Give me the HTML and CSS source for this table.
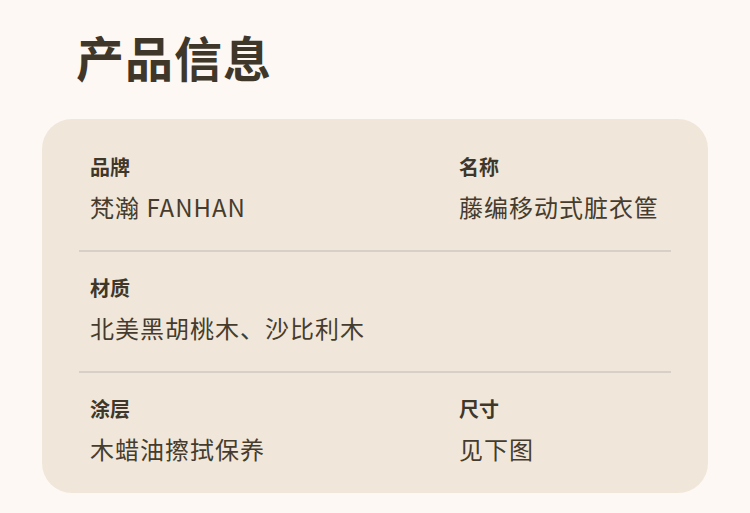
FILE: index.html
```html
<!DOCTYPE html>
<html lang="zh-CN">
<head>
<meta charset="utf-8">
<link rel="stylesheet" href="styles.css">
</head>
<body>
<main class="page">
  <h1 class="title">产品信息</h1>
  <section class="card">
    <div class="row">
      <div class="item">
        <div class="label">品牌</div>
        <div class="value">梵瀚 FANHAN</div>
      </div>
      <div class="item">
        <div class="label">名称</div>
        <div class="value">藤编移动式脏衣筐</div>
      </div>
    </div>
    <div class="row">
      <div class="item">
        <div class="label">材质</div>
        <div class="value">北美黑胡桃木、沙比利木</div>
      </div>
    </div>
    <div class="row last">
      <div class="item">
        <div class="label">涂层</div>
        <div class="value">木蜡油擦拭保养</div>
      </div>
      <div class="item">
        <div class="label">尺寸</div>
        <div class="value">见下图</div>
      </div>
    </div>
  </section>
</main>
</body>
</html>
```
FILE: styles.css
```css
* { box-sizing: border-box; }
html, body {
  margin: 0;
  padding: 0;
  background: #fdf8f4;
}
body {
  width: 750px;
  height: 513px;
  overflow: hidden;
  font-family: "Noto Sans CJK SC", "Noto Sans", sans-serif;
  color: #463c2e;
}
.page {
  padding: 25px 42px 0 42px;
}
.title {
  margin: 0 0 0 34px;
  font-size: 48px;
  line-height: 62px;
  font-weight: 700;
  color: #3f372a;
  letter-spacing: 1px;
}
.card {
  margin-top: 32px;
  width: 666px;
  height: 374px;
  background: #f0e7da;
  border-radius: 30px;
  padding: 12px 37px 0 37px;
}
.row {
  display: grid;
  grid-template-columns: 369px 1fr;
  padding: 22px 11px 26px 11px;
  border-bottom: 2px solid #d8cfc9;
}
.row.last {
  border-bottom: none;
}
.item {
  min-width: 0;
}
.label {
  font-size: 20px;
  line-height: 28px;
  font-weight: 700;
  color: #3f372a;
}
.value {
  margin-top: 9px;
  font-size: 24px;
  line-height: 34px;
  letter-spacing: 1px;
  white-space: nowrap;
  color: #463c2e;
}
```
